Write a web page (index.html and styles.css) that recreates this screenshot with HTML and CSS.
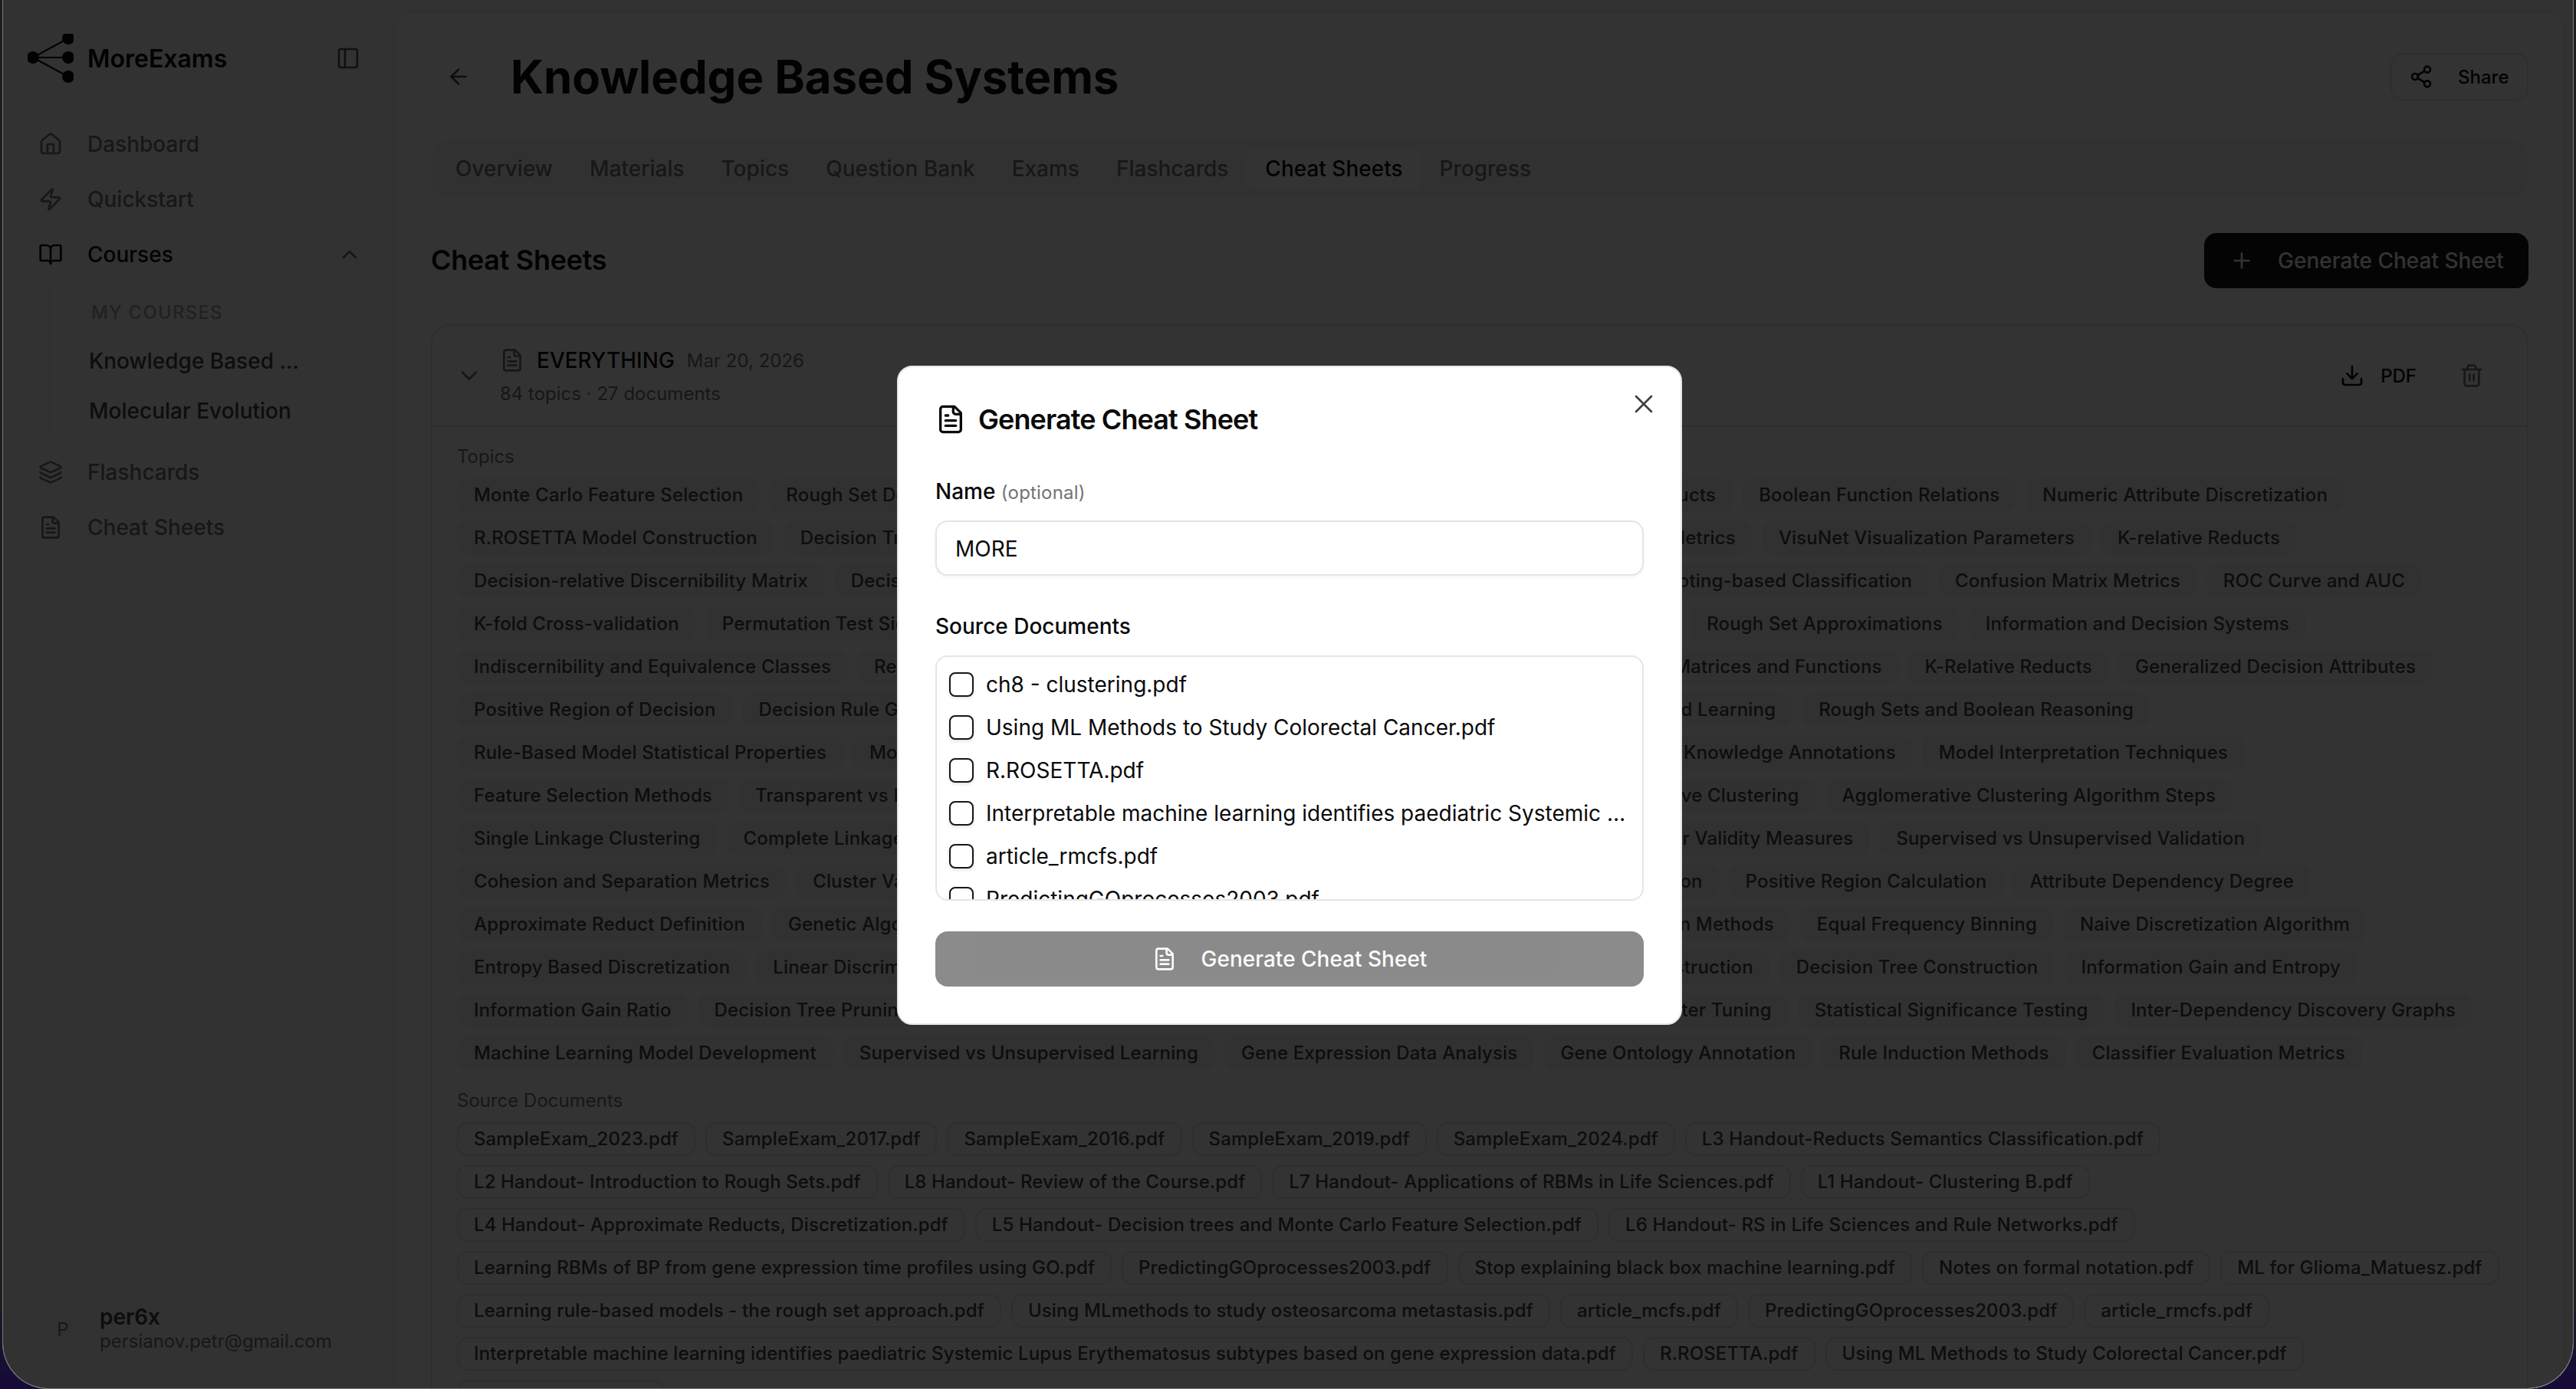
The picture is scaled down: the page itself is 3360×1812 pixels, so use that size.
FILE: index.html
```html
<!DOCTYPE html>
<html lang="en">
<head>
<meta charset="utf-8">
<title>MoreExams - Knowledge Based Systems</title>
<link rel="stylesheet" href="styles.css">
</head>
<body>
<svg class="sprite" aria-hidden="true">
  <symbol id="i-house" viewBox="0 0 24 24"><path d="M15 21v-8a1 1 0 0 0-1-1h-4a1 1 0 0 0-1 1v8"/><path d="M3 10a2 2 0 0 1 .709-1.528l7-5.999a2 2 0 0 1 2.582 0l7 5.999A2 2 0 0 1 21 10v9a2 2 0 0 1-2 2H5a2 2 0 0 1-2-2z"/></symbol>
  <symbol id="i-zap" viewBox="0 0 24 24"><path d="M4 14a1 1 0 0 1-.78-1.63l9.9-10.2a.5.5 0 0 1 .86.46l-1.92 6.02A1 1 0 0 0 13 10h7a1 1 0 0 1 .78 1.63l-9.9 10.2a.5.5 0 0 1-.86-.46l1.92-6.02A1 1 0 0 0 11 14z"/></symbol>
  <symbol id="i-book" viewBox="0 0 24 24"><path d="M12 7v14"/><path d="M3 18a1 1 0 0 1-1-1V4a1 1 0 0 1 1-1h5a4 4 0 0 1 4 4 4 4 0 0 1 4-4h5a1 1 0 0 1 1 1v13a1 1 0 0 1-1 1h-6a3 3 0 0 0-3 3 3 3 0 0 0-3-3z"/></symbol>
  <symbol id="i-layers" viewBox="0 0 24 24"><path d="M12.83 2.18a2 2 0 0 0-1.66 0L2.6 6.08a1 1 0 0 0 0 1.83l8.58 3.91a2 2 0 0 0 1.66 0l8.58-3.9a1 1 0 0 0 0-1.83z"/><path d="M2 12a1 1 0 0 0 .58.91l8.6 3.91a2 2 0 0 0 1.65 0l8.58-3.9A1 1 0 0 0 22 12"/><path d="M2 17a1 1 0 0 0 .58.91l8.6 3.91a2 2 0 0 0 1.65 0l8.58-3.9A1 1 0 0 0 22 17"/></symbol>
  <symbol id="i-file" viewBox="0 0 24 24"><path d="M15 2H6a2 2 0 0 0-2 2v16a2 2 0 0 0 2 2h12a2 2 0 0 0 2-2V7Z"/><path d="M14 2v4a2 2 0 0 0 2 2h4"/><path d="M10 9H8"/><path d="M16 13H8"/><path d="M16 17H8"/></symbol>
  <symbol id="i-panel" viewBox="0 0 24 24"><rect width="18" height="18" x="3" y="3" rx="2"/><path d="M9 3v18"/></symbol>
  <symbol id="i-up" viewBox="0 0 24 24"><path d="m18 15-6-6-6 6"/></symbol>
  <symbol id="i-down" viewBox="0 0 24 24"><path d="m6 9 6 6 6-6"/></symbol>
  <symbol id="i-back" viewBox="0 0 24 24"><path d="m12 19-7-7 7-7"/><path d="M19 12H5"/></symbol>
  <symbol id="i-share" viewBox="0 0 24 24"><circle cx="18" cy="5" r="3"/><circle cx="6" cy="12" r="3"/><circle cx="18" cy="19" r="3"/><line x1="8.59" x2="15.42" y1="13.51" y2="17.49"/><line x1="15.41" x2="8.59" y1="6.51" y2="10.49"/></symbol>
  <symbol id="i-plus" viewBox="0 0 24 24"><path d="M5 12h14"/><path d="M12 5v14"/></symbol>
  <symbol id="i-download" viewBox="0 0 24 24"><path d="M21 15v4a2 2 0 0 1-2 2H5a2 2 0 0 1-2-2v-4"/><polyline points="7 10 12 15 17 10"/><line x1="12" x2="12" y1="15" y2="3"/></symbol>
  <symbol id="i-trash" viewBox="0 0 24 24"><path d="M3 6h18"/><path d="M19 6v14c0 1-1 2-2 2H7c-1 0-2-1-2-2V6"/><path d="M8 6V4c0-1 1-2 2-2h4c1 0 2 1 2 2v2"/><line x1="10" x2="10" y1="11" y2="17"/><line x1="14" x2="14" y1="11" y2="17"/></symbol>
  <symbol id="i-x" viewBox="0 0 24 24"><path d="M18 6 6 18"/><path d="m6 6 12 12"/></symbol>
</svg>

<div class="window">
  <aside class="sidebar">
    <div class="brand">
      <svg class="logo" viewBox="0 0 60 64">
        <line x1="7" y1="31" x2="53" y2="6"/><line x1="7" y1="31" x2="53" y2="31"/><line x1="7" y1="31" x2="53" y2="56"/>
        <circle cx="7" cy="31" r="7"/><circle cx="53" cy="6" r="7"/><circle cx="53" cy="31" r="7"/><circle cx="53" cy="56" r="7"/>
      </svg>
      <span class="brand-name">MoreExams</span>
      <svg class="icon icon-panel"><use href="#i-panel"/></svg>
    </div>
    <nav class="nav">
      <a class="nav-item"><svg class="icon"><use href="#i-house"/></svg><span>Dashboard</span></a>
      <a class="nav-item"><svg class="icon"><use href="#i-zap"/></svg><span>Quickstart</span></a>
      <a class="nav-item nav-item-open"><svg class="icon"><use href="#i-book"/></svg><span>Courses</span><svg class="icon nav-chevron"><use href="#i-up"/></svg></a>
      <div class="subnav">
        <div class="subnav-label">MY COURSES</div>
        <a class="subnav-item">Knowledge Based ...</a>
        <a class="subnav-item">Molecular Evolution</a>
      </div>
      <a class="nav-item"><svg class="icon"><use href="#i-layers"/></svg><span>Flashcards</span></a>
      <a class="nav-item"><svg class="icon"><use href="#i-file"/></svg><span>Cheat Sheets</span></a>
    </nav>
    <div class="user">
      <div class="avatar">P</div>
      <div class="user-text">
        <div class="user-name">per6x</div>
        <div class="user-mail">persianov.petr@gmail.com</div>
      </div>
    </div>
  </aside>

  <main class="main">
    <header class="page-head">
      <svg class="icon icon-back"><use href="#i-back"/></svg>
      <h1 class="page-title">Knowledge Based Systems</h1>
      <button class="share-btn"><svg class="icon"><use href="#i-share"/></svg>Share</button>
    </header>

    <div class="tabs">
      <span class="tab">Overview</span><span class="tab">Materials</span><span class="tab">Topics</span><span class="tab">Question Bank</span><span class="tab">Exams</span><span class="tab">Flashcards</span><span class="tab tab-active">Cheat Sheets</span><span class="tab">Progress</span>
    </div>

    <div class="section-head">
      <h2 class="section-title">Cheat Sheets</h2>
      <button class="primary-btn"><svg class="icon"><use href="#i-plus"/></svg>Generate Cheat Sheet</button>
    </div>

    <section class="card">
      <div class="card-head">
        <svg class="icon icon-chevron"><use href="#i-down"/></svg>
        <div class="card-info">
          <div class="card-title-row">
            <svg class="icon icon-muted"><use href="#i-file"/></svg>
            <span class="card-title">EVERYTHING</span>
            <span class="card-date">Mar 20, 2026</span>
          </div>
          <div class="card-sub">84 topics · 27 documents</div>
        </div>
        <div class="card-actions">
          <span class="pdf"><svg class="icon"><use href="#i-download"/></svg>PDF</span>
          <svg class="icon icon-muted"><use href="#i-trash"/></svg>
        </div>
      </div>
      <div class="card-body">
        <div class="chips-label">Topics</div>
        <div class="topic-rows">
          <div class="topic-row r1"><span class="topic">Monte Carlo Feature Selection</span><span class="topic">Rough Set Definitions</span><span class="topic topic-fill"></span><span class="topic">Attribute Core and Reducts</span><span class="topic">Boolean Function Relations</span><span class="topic">Numeric Attribute Discretization</span></div>
          <div class="topic-row r2"><span class="topic">R.ROSETTA Model Construction</span><span class="topic">Decision Tree Rules</span><span class="topic topic-fill"></span><span class="topic">Rule Quality Metrics</span><span class="topic">VisuNet Visualization Parameters</span><span class="topic">K-relative Reducts</span></div>
          <div class="topic-row r3"><span class="topic">Decision-relative Discernibility Matrix</span><span class="topic">Decision Rule Support</span><span class="topic topic-fill"></span><span class="topic">Voting-based Classification</span><span class="topic">Confusion Matrix Metrics</span><span class="topic">ROC Curve and AUC</span></div>
          <div class="topic-row r4"><span class="topic">K-fold Cross-validation</span><span class="topic">Permutation Test Significance</span><span class="topic topic-fill"></span><span class="topic">Rough Set Approximations</span><span class="topic">Information and Decision Systems</span></div>
          <div class="topic-row r5"><span class="topic">Indiscernibility and Equivalence Classes</span><span class="topic">Reduct Computation</span><span class="topic topic-fill"></span><span class="topic">Discernibility Matrices and Functions</span><span class="topic">K-Relative Reducts</span><span class="topic">Generalized Decision Attributes</span></div>
          <div class="topic-row r6"><span class="topic">Positive Region of Decision</span><span class="topic">Decision Rule Generation</span><span class="topic topic-fill"></span><span class="topic">Rule-Based Learning</span><span class="topic">Rough Sets and Boolean Reasoning</span></div>
          <div class="topic-row r7"><span class="topic">Rule-Based Model Statistical Properties</span><span class="topic">Monte Carlo Sampling</span><span class="topic topic-fill"></span><span class="topic">Biological Knowledge Annotations</span><span class="topic">Model Interpretation Techniques</span></div>
          <div class="topic-row r8"><span class="topic">Feature Selection Methods</span><span class="topic">Transparent vs Black-box Models</span><span class="topic topic-fill"></span><span class="topic">Hierarchical Divisive Clustering</span><span class="topic">Agglomerative Clustering Algorithm Steps</span></div>
          <div class="topic-row r9"><span class="topic">Single Linkage Clustering</span><span class="topic">Complete Linkage Clustering</span><span class="topic topic-fill"></span><span class="topic">Cluster Validity Measures</span><span class="topic">Supervised vs Unsupervised Validation</span></div>
          <div class="topic-row r10"><span class="topic">Cohesion and Separation Metrics</span><span class="topic">Cluster Validity Indices</span><span class="topic topic-fill"></span><span class="topic">Reduct Approximation</span><span class="topic">Positive Region Calculation</span><span class="topic">Attribute Dependency Degree</span></div>
          <div class="topic-row r11"><span class="topic">Approximate Reduct Definition</span><span class="topic">Genetic Algorithms</span><span class="topic topic-fill"></span><span class="topic">Discretization Methods</span><span class="topic">Equal Frequency Binning</span><span class="topic">Naive Discretization Algorithm</span></div>
          <div class="topic-row r12"><span class="topic">Entropy Based Discretization</span><span class="topic">Linear Discriminant Analysis</span><span class="topic topic-fill"></span><span class="topic">Rule Model Construction</span><span class="topic">Decision Tree Construction</span><span class="topic">Information Gain and Entropy</span></div>
          <div class="topic-row r13"><span class="topic">Information Gain Ratio</span><span class="topic">Decision Tree Pruning</span><span class="topic topic-fill"></span><span class="topic">Hyperparameter Tuning</span><span class="topic">Statistical Significance Testing</span><span class="topic">Inter-Dependency Discovery Graphs</span></div>
          <div class="topic-row"><span class="topic">Machine Learning Model Development</span><span class="topic">Supervised vs Unsupervised Learning</span><span class="topic">Gene Expression Data Analysis</span><span class="topic">Gene Ontology Annotation</span><span class="topic">Rule Induction Methods</span><span class="topic">Classifier Evaluation Metrics</span></div>
        </div>
        <div class="chips-label chips-label-docs">Source Documents</div>
        <div class="doc-list">
          <span class="doc">SampleExam_2023.pdf</span><span class="doc">SampleExam_2017.pdf</span><span class="doc">SampleExam_2016.pdf</span><span class="doc">SampleExam_2019.pdf</span><span class="doc">SampleExam_2024.pdf</span><span class="doc">L3 Handout-Reducts Semantics Classification.pdf</span>
          <span class="doc">L2 Handout- Introduction to Rough Sets.pdf</span><span class="doc">L8 Handout- Review of the Course.pdf</span><span class="doc">L7 Handout- Applications of RBMs in Life Sciences.pdf</span><span class="doc">L1 Handout- Clustering B.pdf</span>
          <span class="doc">L4 Handout- Approximate Reducts, Discretization.pdf</span><span class="doc">L5 Handout- Decision trees and Monte Carlo Feature Selection.pdf</span><span class="doc">L6 Handout- RS in Life Sciences and Rule Networks.pdf</span>
          <span class="doc">Learning RBMs of BP from gene expression time profiles using GO.pdf</span><span class="doc">PredictingGOprocesses2003.pdf</span><span class="doc">Stop explaining black box machine learning.pdf</span><span class="doc">Notes on formal notation.pdf</span><span class="doc">ML for Glioma_Matuesz.pdf</span>
          <span class="doc">Learning rule-based models - the rough set approach.pdf</span><span class="doc">Using MLmethods to study osteosarcoma metastasis.pdf</span><span class="doc">article_mcfs.pdf</span><span class="doc">PredictingGOprocesses2003.pdf</span><span class="doc">article_rmcfs.pdf</span>
          <span class="doc">Interpretable machine learning identifies paediatric Systemic Lupus Erythematosus subtypes based on gene expression data.pdf</span><span class="doc">R.ROSETTA.pdf</span><span class="doc">Using ML Methods to Study Colorectal Cancer.pdf</span>
          <span class="doc doc-empty"></span>
        </div>
      </div>
    </section>
  </main>

  <div class="overlay">
    <div class="modal">
      <svg class="icon icon-close"><use href="#i-x"/></svg>
      <h2 class="modal-title"><svg class="icon"><use href="#i-file"/></svg>Generate Cheat Sheet</h2>
      <label class="field-label field-label-name">Name <span class="optional">(optional)</span></label>
      <input class="name-input" type="text" value="MORE">
      <label class="field-label field-label-docs">Source Documents</label>
      <div class="source-list">
        <label class="source-row"><input class="check" type="checkbox"><span class="source-name">ch8 - clustering.pdf</span></label>
        <label class="source-row"><input class="check" type="checkbox"><span class="source-name">Using ML Methods to Study Colorectal Cancer.pdf</span></label>
        <label class="source-row"><input class="check" type="checkbox"><span class="source-name">R.ROSETTA.pdf</span></label>
        <label class="source-row"><input class="check" type="checkbox"><span class="source-name">Interpretable machine learning identifies paediatric Systemic Lupus Erythematosus subtypes based on gene expression data.pdf</span></label>
        <label class="source-row"><input class="check" type="checkbox"><span class="source-name">article_rmcfs.pdf</span></label>
        <label class="source-row"><input class="check" type="checkbox"><span class="source-name">PredictingGOprocesses2003.pdf</span></label>
      </div>
      <button class="submit-btn"><svg class="icon"><use href="#i-file"/></svg>Generate Cheat Sheet</button>
    </div>
  </div>
</div>
</body>
</html>
```
FILE: styles.css
```css
* { box-sizing: border-box; }
html, body { margin: 0; height: 100%; }
body {
  height: 1812px;
  overflow: hidden;
  padding: 0 3px;
  background: linear-gradient(180deg, #1d1d1f 0%, #1d1d1f 93%, #17093a 100%);
  font-family: Inter, "Liberation Sans", sans-serif;
  color: #0a0a0a;
}
.sprite { display: none; }
.icon {
  width: 32px; height: 32px; flex: none;
  fill: none; stroke: currentColor; stroke-width: 2;
  stroke-linecap: round; stroke-linejoin: round;
}
button, input { font-family: inherit; }

.window {
  position: relative;
  height: 1812px;
  display: flex;
  overflow: hidden;
  background: #fafafa;
  border: 1px solid #7a7a7a;
  border-top: 0;
  border-radius: 0 0 60px 60px;
}

/* Sidebar */
.sidebar { width: 510px; flex: none; display: flex; flex-direction: column; padding: 36px 32px 45px; }
.brand { display: flex; align-items: center; height: 80px; }
.logo { width: 60px; height: 64px; flex: none; fill: #0a0a0a; stroke: #0a0a0a; stroke-width: 2; }
.brand-name { margin-left: 18px; font-size: 32px; font-weight: 600; }
.icon-panel { margin-left: auto; margin-right: 12px; color: #525252; }
.nav { display: flex; flex-direction: column; margin-top: 36px; }
.nav-item { display: flex; align-items: center; height: 72px; padding-left: 14px; gap: 32px; font-size: 28px; font-weight: 500; color: #737373; }
.nav-item-open { color: #0a0a0a; }
.nav-chevron { margin-left: auto; margin-right: 10px; color: #737373; }
.subnav { margin: 5px 0 11px 28px; height: 196px; border-left: 2px solid #e5e5e5; padding-left: 50px; }
.subnav-label { margin: 17px 0 13px; padding-left: 3px; height: 36px; line-height: 36px; font-size: 24px; font-weight: 500; letter-spacing: 1.2px; color: #a3a3a3; }
.subnav-item { display: block; height: 65px; line-height: 65px; font-size: 28px; font-weight: 500; color: #404040; }
.user { margin-top: auto; display: flex; align-items: center; gap: 16px; padding-left: 14px; }
.avatar { width: 64px; height: 64px; border-radius: 50%; background: #f5f5f5; display: flex; align-items: center; justify-content: center; font-size: 24px; color: #737373; }
.user-name { font-size: 28px; line-height: 32px; font-weight: 600; color: #404040; }
.user-mail { font-size: 24px; line-height: 32px; color: #737373; }

/* Main */
.main { width: 2832px; height: 1900px; flex: none; margin-top: 14px; background: #fff; border: 2px solid #f0f0f0; border-radius: 24px; padding: 53px 46px 0; }
.page-head { display: flex; align-items: center; height: 62px; padding-left: 20px; }
.icon-back { color: #404040; }
.page-title { margin: 0 0 0 52px; font-size: 60px; line-height: 62px; font-weight: 700; letter-spacing: -0.1px; }
.share-btn { margin-left: auto; width: 180px; height: 62px; display: flex; align-items: center; gap: 32px; padding: 0 22px; background: #fff; border: 2px solid #e5e5e5; border-radius: 16px; font-size: 24px; font-weight: 500; color: #0a0a0a; }
.tabs { margin-top: 53px; height: 72px; display: flex; align-items: center; padding-left: 8px; background: #f5f5f5; border-radius: 20px; }
.tab { height: 56px; line-height: 56px; padding: 0 24px; font-size: 28px; font-weight: 500; color: #737373; border-radius: 14px; }
.tab-active { background: #fff; color: #0a0a0a; }
.section-head { margin-top: 48px; height: 72px; display: flex; align-items: center; justify-content: space-between; }
.section-title { margin: 0 0 2px; font-size: 36px; font-weight: 600; letter-spacing: -0.3px; }
.primary-btn { width: 423px; height: 72px; display: flex; align-items: center; gap: 31px; padding: 0 0 0 33px; background: #171717; border: 0; border-radius: 16px; font-size: 28px; font-weight: 500; color: #fafafa; }
.card { margin-top: 47px; border: 2px solid #e5e5e5; border-radius: 24px; }
.card-head { height: 132px; display: flex; align-items: center; padding: 0 56px 0 30px; border-bottom: 2px solid #e5e5e5; }
.icon-chevron { width: 36px; height: 36px; margin-right: 22px; color: #737373; }
.card-info { display: flex; flex-direction: column; }
.card-title-row { display: flex; align-items: center; height: 46px; }
.icon-muted { color: #737373; }
.card-title { margin-left: 16px; font-size: 28px; font-weight: 500; }
.card-date { margin-left: 16px; font-size: 24px; color: #737373; }
.card-sub { height: 40px; line-height: 42px; font-size: 24px; color: #737373; }
.card-actions { margin-left: auto; display: flex; align-items: center; gap: 56px; }
.pdf { display: flex; align-items: center; gap: 21px; font-size: 24px; font-weight: 500; }
.card-body { padding: 23px 16px 0 32px; }
.chips-label { height: 32px; line-height: 32px; margin-bottom: 12px; font-size: 24px; color: #737373; }
.chips-label-docs { margin-top: 24px; margin-bottom: 12px; }
.topic-rows { display: flex; flex-direction: column; gap: 12px; }
.topic-row { display: flex; gap: 12px; }
.topic { flex: none; height: 44px; line-height: 36px; padding: 4px 22px; background: #f5f5f5; border-radius: 14px; font-size: 24px; font-weight: 500; letter-spacing: .15px; color: #404040; white-space: nowrap; }
.topic-fill { flex: 1 1 0; min-width: 0; }
.r1 { width: 2462px; } .r2 { width: 2400px; } .r3 { width: 2563px; } .r4 { width: 2412px; }
.r5 { width: 2577px; } .r6 { width: 2209px; } .r7 { width: 2332px; } .r8 { width: 2316px; }
.r9 { width: 2354px; } .r10 { width: 2418px; } .r11 { width: 2491px; } .r12 { width: 2479px; } .r13 { width: 2629px; }
.doc-list { display: flex; flex-wrap: wrap; gap: 12px 13px; }
.doc { height: 44px; line-height: 40px; padding: 0 20px; background: #fff; border: 2px solid #e5e5e5; border-radius: 14px; font-size: 24px; font-weight: 500; letter-spacing: .11px; color: #404040; white-space: nowrap; }
.doc-empty { width: 270px; }

/* Modal */
.overlay { position: absolute; inset: 0; display: flex; align-items: center; justify-content: center; padding-left: 4px; background: rgba(0, 0, 0, .8); }
.modal { position: relative; width: 1024px; height: 860px; margin-top: 2px; background: #fff; border: 2px solid #e5e5e5; border-radius: 20px; padding: 48px; display: flex; flex-direction: column; }
.icon-close { position: absolute; top: 28px; right: 28px; width: 40px; height: 40px; color: #404040; stroke-width: 1.6; }
.modal-title { margin: 0; height: 40px; display: flex; align-items: center; gap: 16px; font-size: 36px; font-weight: 600; letter-spacing: -.9px; }
.modal-title .icon { width: 40px; height: 40px; }
.field-label { display: block; height: 40px; line-height: 40px; font-size: 28px; font-weight: 500; }
.field-label-name { margin-top: 54px; }
.field-label-docs { margin-top: 46px; }
.optional { font-size: 24px; font-weight: 400; letter-spacing: .2px; color: #737373; }
.name-input { margin-top: 18px; width: 100%; height: 72px; flex: none; padding: 2px 24px 0; background: #fff; border: 2px solid #e5e5e5; border-radius: 16px; box-shadow: 0 2px 4px rgba(0, 0, 0, .05); font-size: 28px; color: #0a0a0a; outline: none; }
.source-list { margin-top: 18px; height: 320px; flex: none; overflow: hidden; padding: 8px; border: 2px solid #e5e5e5; border-radius: 16px; }
.source-row { display: flex; align-items: center; gap: 16px; height: 56px; padding: 0 8px; }
.check { appearance: none; margin: 0; width: 32px; height: 32px; flex: none; background: #fff; border: 2px solid #171717; border-radius: 8px; box-shadow: 0 2px 4px rgba(0, 0, 0, .12); }
.source-name { min-width: 0; font-size: 28px; white-space: nowrap; overflow: hidden; text-overflow: ellipsis; }
.submit-btn { margin-top: 40px; height: 72px; flex: none; display: flex; align-items: center; justify-content: center; gap: 32px; background: #171717; opacity: .5; border: 0; border-radius: 16px; font-size: 28px; font-weight: 500; color: #fafafa; }
```
